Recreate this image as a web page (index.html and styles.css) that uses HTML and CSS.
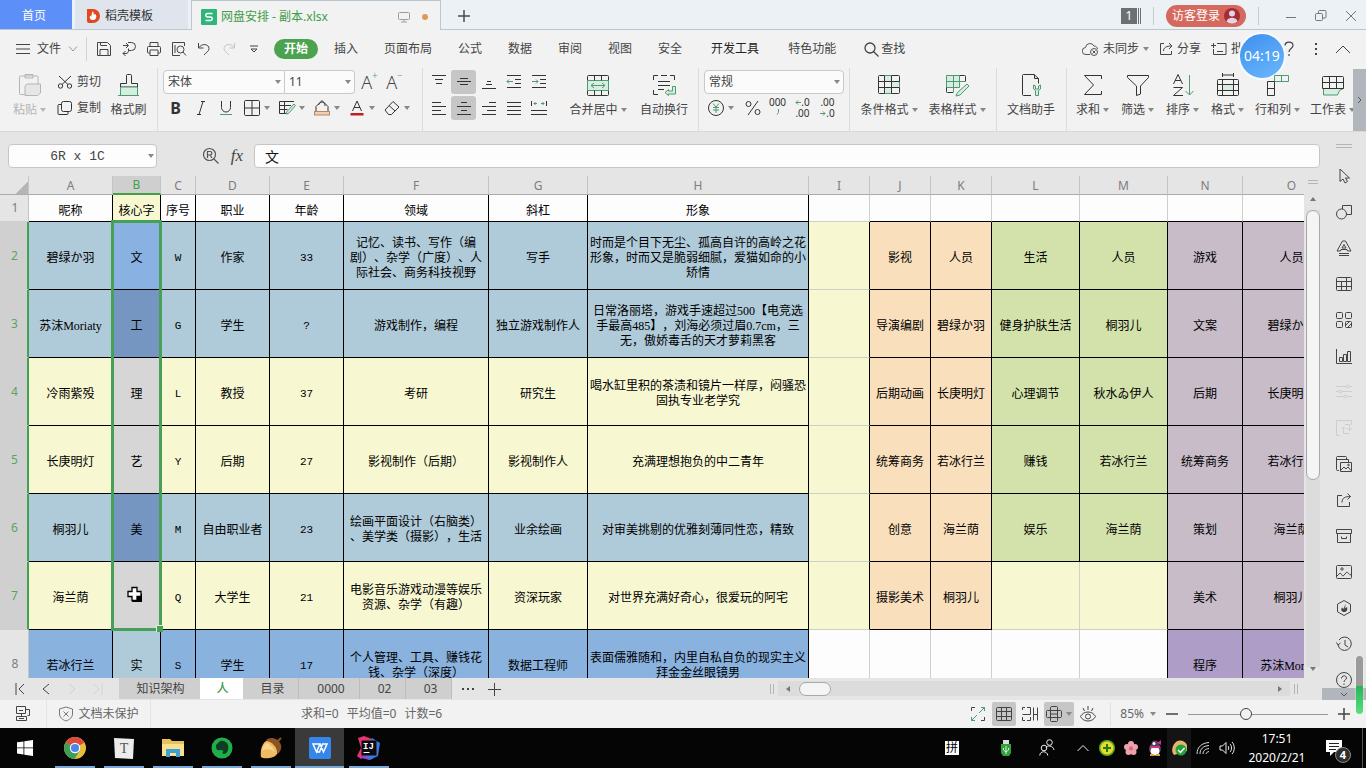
FILE: index.html
```html
<!DOCTYPE html>
<html lang="zh-CN">
<head>
<meta charset="utf-8">
<title>网盘安排 - 副本.xlsx</title>
<link rel="stylesheet" href="styles.css">
</head>
<body>
<div class="app">

<header class="titlebar">
  <button class="tab home">首页</button>
  <button class="tab docer"><svg width="14" height="16" viewBox="0 0 14 16"><path d="M1 1h6a7 7 0 0 1 0 14H3a2 2 0 0 1-2-2z" fill="#df4a1d"/><path d="M7 3c1 2 .2 3 1 4 .5-.3.7-.8.7-1.400C10.500 7 11 9 9.500 11 8.500 12.500 5 12.500 4 10.500 3.300 9 4 8 4.300 7.500 4.500 8.200 5 8.600 5.500 8.600 5.500 6.500 5.800 4.500 7 3z" fill="#fff"/></svg>稻壳模板</button>
  <button class="tab doc"><svg width="16" height="16" viewBox="0 0 16 16"><rect width="16" height="16" rx="1" fill="#2fb57c"/><path d="M11.500 4.500h-5a1.700 1.700 0 0 0 0 3.500h3a1.700 1.700 0 0 1 0 3.500h-5" fill="none" stroke="#fff" stroke-width="1.400"/></svg><span>网盘安排 - 副本.xlsx</span>
    <svg class="push" width="12" height="12" viewBox="0 0 12 12" fill="none" stroke="#9a9da0"><rect x=".5" y="1.500" width="11" height="7" rx="1"/><path d="M6 8.500v2M3 11h6"/></svg><i class="dot"></i></button>
  <button class="newtab" aria-label="新建"><svg width="14" height="14" viewBox="0 0 14 14" stroke="#4a4d50" stroke-width="1.500"><path d="M7 1v12M1 7h12"/></svg></button>
  <div class="winctl">
    <button class="count" aria-label="窗口数"><b>1</b><i></i><i></i></button>
    <span class="vline"></span>
    <button class="login">访客登录<svg width="16" height="16" viewBox="0 0 16 16"><circle cx="8" cy="8" r="8" fill="#a32d38"/><circle cx="8" cy="5.500" r="3" fill="#e3d5e2"/><path d="M2.500 13.500c1-5 10-5 11 0a8 8 0 0 1-11 0z" fill="#e3d5e2"/></svg></button>
    <span class="vline"></span>
    <button class="wbtn" aria-label="最小化"><svg width="12" height="12" viewBox="0 0 12 12" stroke="#777"><path d="M1 7.500h10"/></svg></button>
    <button class="wbtn" aria-label="还原"><svg width="12" height="12" viewBox="0 0 12 12" fill="none" stroke="#777"><rect x=".5" y="3.500" width="7" height="7" rx="1"/><path d="M3.500 3V1.500a1 1 0 0 1 1-1h5.500a1 1 0 0 1 1 1V7a1 1 0 0 1-1 1H8"/></svg></button>
    <button class="wbtn" aria-label="关闭"><svg width="12" height="12" viewBox="0 0 12 12" stroke="#777"><path d="M1 1l10 10M11 1L1 11"/></svg></button>
  </div>
</header>

<nav class="menubar">
  <button class="file"><svg width="14" height="12" viewBox="0 0 14 12" stroke="#444"><path d="M0 1.500h14M0 6h14M0 10.500h14"/></svg>文件<svg width="10" height="6" viewBox="0 0 10 6" fill="none" stroke="#999"><path d="M1 .5l4 4.500 4-4.500"/></svg></button>
  <div class="quick">
    <button aria-label="保存"><svg class="i16" viewBox="0 0 16 16"><path d="M1.500 1.500h10l3 3v10h-13zM4 14V8.500h8V14M5 4.500h6M4.500 1.500v3"/></svg></button>
    <button aria-label="输出"><svg class="i16" viewBox="0 0 16 16"><path d="M2 4.500h5M5 2l2.500 2.500L5 7M7 1.500h3.500a4 4 0 0 1 0 8H7.500M2 12.500h3c1.500 0 2.500-1 2.500-3V7.500M2 12.500l2.500-2.500M2 12.500l2.500 2.500"/></svg></button>
    <button aria-label="打印"><svg class="i16" viewBox="0 0 16 16"><path d="M4 5V1.500h8V5M4 12H2.500a1 1 0 0 1-1-1V6.500a1 1 0 0 1 1-1h11a1 1 0 0 1 1 1V11a1 1 0 0 1-1 1H12M4 9h8v5.500H4z"/></svg></button>
    <button aria-label="预览"><svg class="i16" viewBox="0 0 16 16"><path d="M13.500 5V1.500h-12v13H9M4 4v8"/><circle cx="9.500" cy="8.500" r="3.500"/><path d="M12 11l3 3.500"/></svg></button>
    <button aria-label="撤销"><svg class="i16" viewBox="0 0 16 16"><path d="M2.500 2v5h5M3 6.500c3-4.500 10-3.500 10 1 0 3-3 4-5 6.500"/></svg></button>
    <button aria-label="重做"><svg class="i16 off" viewBox="0 0 16 16"><path d="M13.500 2v5h-5M13 6.500c-3-4.500-10-3.500-10 1 0 3 3 4 5 6.500"/></svg></button>
    <button aria-label="更多"><svg class="i16" viewBox="0 0 16 16"><path d="M4 5h8M5 8l3 3 3-3z"/></svg></button>
  </div>
  <div class="menus">
    <button class="on">开始</button><button>插入</button><button>页面布局</button><button>公式</button><button>数据</button><button>审阅</button><button>视图</button><button>安全</button><button class="dev">开发工具</button><button class="sp">特色功能</button>
    <button class="find"><svg width="15" height="15" viewBox="0 0 15 15" fill="none" stroke="#444" stroke-width="1.300"><circle cx="6" cy="6" r="5"/><path d="M9.500 9.500l5 5"/></svg>查找</button>
  </div>
  <div class="share">
    <button><svg width="17" height="14" viewBox="0 0 17 14" fill="none" stroke="#555"><path d="M8 12.500H4a3.500 3.500 0 0 1-.500-7A4.500 4.500 0 0 1 12 4c2 0 3 1 3.500 3"/><circle cx="12" cy="10" r="3.500"/><path d="M10.500 8.500l3 3M13.500 8.500l-3 3"/></svg>未同步<i class="car"></i></button>
    <button><svg width="14" height="14" viewBox="0 0 14 14" fill="none" stroke="#444"><path d="M5 1.500H1.500v11h11V9M4.500 9c0-3.500 3-5 8-5M10 1l3 3-3 3"/></svg>分享</button>
    <button><svg width="16" height="14" viewBox="0 0 16 14" fill="none" stroke="#444"><path d="M6 1.500h9v11H2.500V7M6 9.500h6M0 3.500h5M2.500 1v5"/></svg>批注</button>
    <span class="timer">04:19</span>
    <button class="q" aria-label="帮助"><svg width="12" height="16" viewBox="0 0 12 16" fill="none" stroke="#444" stroke-width="1.200"><path d="M2 4.500C2 0 10 0 10 4.500 10 7.500 6 7.500 6 11M6 13v2"/></svg></button>
    <button class="q" aria-label="更多"><svg width="4" height="14" viewBox="0 0 4 14" fill="#444"><rect x="1" y="1" width="2" height="2"/><rect x="1" y="6" width="2" height="2"/><rect x="1" y="11" width="2" height="2"/></svg></button>
    <button class="q" aria-label="收起"><svg width="16" height="9" viewBox="0 0 16 9" fill="none" stroke="#444"><path d="M1 8l7-7 7 7"/></svg></button>
  </div>
</nav>

<section class="ribbon">
  <div class="grp g1">
    <button class="big dim"><svg class="i24" viewBox="0 0 24 24"><path d="M9 21.500H2.500a1 1 0 0 1-1-1V4a1 1 0 0 1 1-1H19a1 1 0 0 1 1 1v7"/><path d="M7 1.500h8V5H7z"/><path fill="#e6e6e6" d="M9 11h13.500v9l-3 2.500H7V13z"/></svg><span>粘贴<i class="car"></i></span></button>
    <div class="pair"><button><svg width="16" height="16" viewBox="0 0 16 16" fill="none" stroke="#333"><circle cx="3.500" cy="12" r="2.200"/><circle cx="12.500" cy="12" r="2.200"/><path d="M5 10.500L14 2M11 10.500L2 2"/></svg>剪切</button>
    <button><svg width="16" height="16" viewBox="0 0 16 16" fill="none" stroke="#333"><rect x="4.500" y="1.500" width="10" height="10" rx="2"/><path d="M4 4.500H2a1 1 0 0 0-1 1v8a1 1 0 0 0 1 1h8a1 1 0 0 0 1-1v-1.500"/></svg>复制</button></div>
    <button class="big"><svg class="i24" viewBox="0 0 24 24"><path d="M9.500 2.500a1 1 0 0 1 1-1h3a1 1 0 0 1 1 1v8h6v3.500h-17v-3.500h6z"/><path class="gf" d="M3.500 14h17v8.500h-17z"/><path class="gl" d="M1 22.500h21"/></svg><span>格式刷</span></button>
  </div>
  <div class="grp g2">
    <div class="row">
      <div class="combo"><select class="fname" aria-label="字体"><option>宋体</option></select><i class="car"></i></div><div class="combo end"><select class="fsize" aria-label="字号"><option>11</option></select><i class="car"></i></div>
      <button class="cell25 fbig" aria-label="增大字号">A<sup>+</sup></button><button class="cell25 fbig" aria-label="减小字号">A<sup>−</sup></button>
    </div>
    <div class="row low">
      <button class="cell25 bold" aria-label="加粗">B</button>
      <button class="cell25" aria-label="倾斜"><svg class="i18" viewBox="0 0 18 18"><path d="M9 2.500h4M5 15.500h4M11 2.500l-4 13"/></svg></button>
      <button class="cell25" aria-label="下划线"><svg class="i18" viewBox="0 0 18 18"><path d="M4.500 2v6.500a4.500 4.500 0 0 0 9 0V2"/><path class="gl" d="M3 15.500h12"/></svg></button>
      <button class="drop" aria-label="边框"><svg class="i18" viewBox="0 0 18 18"><rect x="1.500" y="1.500" width="15" height="15" rx="1"/><path d="M9 2v14M2 9h14"/></svg><i class="car"></i></button>
      <button class="drop" aria-label="绘图边框"><svg class="i18" viewBox="0 0 18 18"><path d="M16 2.500H1.500v12H8M1.500 6.500H13M1.500 10.500h8M6.500 2.500v12"/><path class="gf" d="M16 5l1.500 1.500-7 8-2.500.5.500-2z"/></svg><i class="car"></i></button>
      <button class="drop" aria-label="填充"><svg class="i18" viewBox="0 0 18 18"><path d="M9 1.500l6 6v5H3v-5zM5.500 6C7 2 12 2 12 7"/><rect x="1.500" y="12.500" width="15" height="3.500" fill="#f3cfb0" stroke="#b08a6a"/></svg><i class="car"></i></button>
      <button class="drop" aria-label="字体颜色"><svg class="i18" viewBox="0 0 18 18"><path d="M4.500 12L9 2l4.500 10M6 8.500h6"/><rect x="2.500" y="14" width="13" height="2.500" fill="#c11f1f" stroke="none"/></svg><i class="car"></i></button>
      <button class="drop" aria-label="清除"><svg class="i18" viewBox="0 0 18 18"><path d="M10 2.500l6 5.500-7.500 7.500h-3L2 11zM6 6.500l6 5.500"/></svg><i class="car"></i></button>
    </div>
  </div>
  <div class="grp g3">
    <div class="aligns">
      <div class="row">
        <button class="cell25" aria-label="顶端对齐"><svg class="i18" viewBox="0 0 18 18"><path d="M2 2.500h14M5 6.500h8M6 10.500h6"/></svg></button>
        <button class="cell25 act" aria-label="垂直居中"><svg class="i18" viewBox="0 0 18 18"><path d="M5 5.500h8M2 8.500h14M5 11.500h8"/></svg></button>
        <button class="cell25" aria-label="底端对齐"><svg class="i18" viewBox="0 0 18 18"><path d="M7 8.500h4M6 11.500h6M2 15.500h14"/></svg></button>
        <button class="cell25" aria-label="减少缩进"><svg class="i18" viewBox="0 0 18 18"><path d="M2 2.500h14M10 6.500h6M10 10.500h6M2 14.500h14"/><path class="gl" d="M8 8.500H2M4 6.500l-2 2 2 2"/></svg></button>
        <button class="cell25" aria-label="增加缩进"><svg class="i18" viewBox="0 0 18 18"><path d="M2 2.500h14M10 6.500h6M10 10.500h6M2 14.500h14"/><path class="gl" d="M2 8.500h6M6 6.500l2 2-2 2"/></svg></button>
      </div>
      <div class="row low">
        <button class="cell25" aria-label="左对齐"><svg class="i18" viewBox="0 0 18 18"><path d="M2 3.500h9M2 7.500h14M2 11.500h9M2 15.500h14"/></svg></button>
        <button class="cell25 act" aria-label="水平居中"><svg class="i18" viewBox="0 0 18 18"><path d="M6 3.500h6M2 7.500h14M6 11.500h6M2 15.500h14"/></svg></button>
        <button class="cell25" aria-label="右对齐"><svg class="i18" viewBox="0 0 18 18"><path d="M9 3.500h7M2 7.500h14M7 11.500h9M2 15.500h14"/></svg></button>
        <button class="cell25" aria-label="两端对齐"><svg class="i18" viewBox="0 0 18 18"><path d="M2 3.500h14M2 7.500h14M2 11.500h14M2 15.500h14"/></svg></button>
        <button class="cell25" aria-label="分散对齐"><svg class="i18" viewBox="0 0 18 18"><path d="M1.500 2v5M16.500 2v5M1 11.500h16M1 15.500h16"/><path class="gl" d="M4 4.500h3M11 4.500h3M5.500 3L4 4.500 5.500 6M12.500 3L14 4.500 12.500 6"/></svg></button>
      </div>
    </div>
    <button class="big wide"><svg class="i24" viewBox="0 0 24 24"><rect x="1.500" y="2.500" width="21" height="20" rx="1"/><rect class="gf" x="1.500" y="7.500" width="21" height="10"/><path d="M8.500 2.500v5M15.500 2.500v5M8.500 17.500v5M15.500 17.500v5"/><path class="gl" d="M5 12.500h14M8 10l-3 2.500L8 15M16 10l3 2.500-3 2.500"/></svg><span>合并居中<i class="car"></i></span></button>
    <button class="big wide"><svg class="i24" viewBox="0 0 24 24"><path d="M1.500 7V2.500H6M18 2.500h4.500V7M1.500 17v4.500H6M9 2.500h6M6 8.500h12M6 12.500h12M6 16.500h6"/><path class="gf" d="M20.500 13.500h3v7.500h-7v1.500l-3.500-3 3.500-3V18h4z"/></svg><span>自动换行</span></button>
  </div>
  <div class="grp g4">
    <div class="row"><div class="combo solo"><select class="nfmt" aria-label="数字格式"><option>常规</option></select><i class="car"></i></div></div>
    <div class="row low">
      <button class="drop" aria-label="货币"><svg class="i18" viewBox="0 0 18 18"><circle cx="9" cy="9" r="7.500"/><path class="gl" d="M6 4.500l3 3.500 3-3.500M9 8v6M6 8.500h6M6 11h6"/></svg><i class="car"></i></button>
      <button class="cell25" aria-label="百分比"><svg class="i18" viewBox="0 0 18 18"><circle cx="4.500" cy="5" r="2.500"/><circle cx="13.500" cy="13" r="2.500"/><path d="M14 2L4 16"/></svg></button>
      <button class="cell25 digits k"><span>000</span><svg width="4" height="6" viewBox="0 0 4 6" fill="none" stroke="#4d9a73"><path d="M2.500 0v3.500L1 5.500"/></svg></button>
      <button class="cell25 digits"><span><svg width="6" height="5" viewBox="0 0 6 5" fill="none" stroke="#4d9a73"><path d="M6 2.500H1M3 .5l-2 2 2 2"/></svg>.0</span><span>.00</span></button>
      <button class="cell25 digits"><span>.00</span><span><svg width="6" height="5" viewBox="0 0 6 5" fill="none" stroke="#4d9a73"><path d="M0 2.500h5M3 .5l2 2-2 2"/></svg>.0</span></button>
    </div>
  </div>
  <div class="grp g5">
    <button class="big wide"><svg class="i24" viewBox="0 0 24 24"><rect x="1.500" y="2.500" width="21" height="18" rx="1"/><path class="gf" d="M7.500 2.500h7v6h-7zM7.500 14.500h7v6h-7zM14.500 8.500h8v6h-8z"/><path d="M1.500 8.500h21M1.500 14.500h21M7.500 2.500v18M14.500 2.500v18"/></svg><span>条件格式<i class="car"></i></span></button>
    <button class="big wide"><svg class="i24" viewBox="0 0 24 24"><path class="gf" d="M1.500 2.500h13v12h-13z"/><path d="M14.500 2.500h5a1 1 0 0 1 1 1v5M1.500 14.500v4a1 1 0 0 0 1 1H8"/><path class="gl" d="M1.500 8.500h19M8.500 2.500v17M14.500 2.500v9"/><path class="gf" d="M22 11l2 2-9 9-4 1 1.500-3.500z"/></svg><span>表格样式<i class="car"></i></span></button>
  </div>
  <div class="grp g6">
    <button class="big wide"><svg class="i24" viewBox="0 0 24 24"><path d="M12 22.500H4.500a1 1 0 0 1-1-1V2.500a1 1 0 0 1 1-1H15l4.500 4v5M15.500 1.500v4h4"/><path class="gf" d="M14.500 12v4l2 1.500v5h3v-5l2-1.500v-4l-2 1v3h-3v-3z"/></svg><span>文档助手</span></button>
  </div>
  <div class="grp g7">
    <button class="big"><svg class="i24" viewBox="0 0 24 24"><path d="M20.500 6V2.500H3.500l9 9.500-9 9.500h17V18"/></svg><span>求和<i class="car"></i></span></button>
    <button class="big"><svg class="i24" viewBox="0 0 24 24"><path d="M1.500 2.500h21v2L14.500 13v8l-4 1.500V13l-9-8.500z"/></svg><span>筛选<i class="car"></i></span></button>
    <button class="big"><svg class="i24" viewBox="0 0 24 24"><path d="M2.500 11L7 1.500 11.500 11M4 7.500h6M2.500 14.500h9l-9 8h9.500"/><path class="gl" d="M18.500 2v20M14.500 18l4 4 4-4"/></svg><span>排序<i class="car"></i></span></button>
    <button class="big"><svg class="i24" viewBox="0 0 24 24"><rect x="1.500" y="6.500" width="21" height="16" rx="1"/><path class="gf" d="M6.500 11.500h11v6h-11z"/><path d="M1.500 11.500h21M1.500 17.500h21M6.500 6.500v16M17.500 6.500v16M6.500 0v4M17.500 0v4M6.500 2h11"/></svg><span>格式<i class="car"></i></span></button>
    <button class="big mid"><svg class="i24" viewBox="0 0 24 24"><path class="gl" d="M8.500 2.500h14v6h-14zM15.500 2.500v6"/><path d="M1.500 8.500h7v14h-7zM1.500 15.500h7"/></svg><span>行和列<i class="car"></i></span></button>
    <button class="big mid"><svg class="i24" viewBox="0 0 24 24"><path class="gf" d="M2.500 15.500h20l-4 2-2 4.500h-14z"/><path d="M1.500 15.500v-11a1 1 0 0 1 1-1h19a1 1 0 0 1 1 1v11zM1.500 9.500h21M8.500 3.500v12M15.500 3.500v12"/></svg><span>工作表<i class="car"></i></span></button>
    <button class="more" aria-label="更多工具"><svg width="6" height="8" viewBox="0 0 6 8" fill="none" stroke="#555"><path d="M1 1l3 3-3 3"/></svg></button>
  </div>
</section>

<main class="work">
  <div class="left">
    <div class="fbar">
      <div class="namebox"><input aria-label="名称框" value="6R x 1C"><i class="car"></i></div>
      <button class="mag" aria-label="查看"><svg width="18" height="18" viewBox="0 0 18 18" fill="none" stroke="#555" stroke-width="1.200"><circle cx="7.500" cy="7.500" r="6"/><path d="M12 12l4.500 4.500M5.500 11V4.500h2.500c2.500 0 2.500 3.500 0 3.500H5.500M8 8l2 3"/></svg></button>
      <button class="fx" aria-label="插入函数">fx</button>
      <input class="formula" aria-label="编辑栏" value="文">
    </div>
    <div class="sheetrow">
      <div class="sheet">
      <table>
        <colgroup><col class="c0"><col class="cA"><col class="cB"><col class="cC"><col class="cD"><col class="cD"><col class="cF"><col class="cG"><col class="cH"><col class="cI"><col class="cI"><col class="cI"><col class="cL"><col class="cL"><col class="cN"><col class="cO"></colgroup>
        <thead><tr><th class="corner"></th><th>A</th><th class="sel">B</th><th>C</th><th>D</th><th>E</th><th>F</th><th>G</th><th>H</th><th>I</th><th>J</th><th>K</th><th>L</th><th>M</th><th>N</th><th>O</th></tr></thead>
        <tbody>
        <tr class="r1"><th>1</th><td>昵称</td><td class="ye">核心字</td><td>序号</td><td>职业</td><td>年龄</td><td>领域</td><td>斜杠</td><td>形象</td><td class="nb nr"></td><td class="nr"></td><td class="nr"></td><td class="nr"></td><td class="nr"></td><td class="nr"></td><td class="nr"></td></tr>
        <tr class="s bl"><th>2</th><td>碧绿か羽</td><td class="b1 anchor">文<i class="selbox"></i></td><td class="n">W</td><td>作家</td><td class="n">33</td><td>记忆、读书、写作（编<br>剧）、杂学（广度）、人<br>际社会、商务科技视野</td><td>写手</td><td>时而是个目下无尘、孤高自许的高岭之花<br>形象，时而又是脆弱细腻，爱猫如命的小<br>矫情</td><td class="ye nb"></td><td class="or">影视</td><td class="or">人员</td><td class="gr">生活</td><td class="gr">人员</td><td class="pu">游戏</td><td class="pu">人员</td></tr>
        <tr class="s bl"><th>3</th><td>苏沫Moriaty</td><td class="b2">工</td><td class="n">G</td><td>学生</td><td class="n">?</td><td>游戏制作，编程</td><td>独立游戏制作人</td><td>日常洛丽塔，游戏手速超过500【电竞选<br>手最高485】，刘海必须过眉0.7cm，三<br>无，傲娇毒舌的天才萝莉黑客</td><td class="ye nb"></td><td class="or">导演编剧</td><td class="or">碧绿か羽</td><td class="gr">健身护肤生活</td><td class="gr">桐羽儿</td><td class="pu">文案</td><td class="pu">碧绿か羽</td></tr>
        <tr class="s yl"><th>4</th><td>冷雨紫殁</td><td class="b3">理</td><td class="n">L</td><td>教授</td><td class="n">37</td><td>考研</td><td>研究生</td><td>喝水缸里积的茶渍和镜片一样厚，闷骚恐<br>固执专业老学究</td><td class="ye nb"></td><td class="or">后期动画</td><td class="or">长庚明灯</td><td class="gr">心理调节</td><td class="gr">秋水ゐ伊人</td><td class="pu">后期</td><td class="pu">长庚明灯</td></tr>
        <tr class="s yl"><th>5</th><td>长庚明灯</td><td class="b3">艺</td><td class="n">Y</td><td>后期</td><td class="n">27</td><td>影视制作（后期）</td><td>影视制作人</td><td>充满理想抱负的中二青年</td><td class="ye nb"></td><td class="or">统筹商务</td><td class="or">若冰行兰</td><td class="gr">赚钱</td><td class="gr">若冰行兰</td><td class="pu">统筹商务</td><td class="pu">若冰行兰</td></tr>
        <tr class="s bl"><th>6</th><td>桐羽儿</td><td class="b2">美</td><td class="n">M</td><td>自由职业者</td><td class="n">23</td><td>绘画平面设计（右脑类）<br>、美学类（摄影），生活</td><td>业余绘画</td><td>对审美挑剔的优雅刻薄同性恋，精致</td><td class="ye nb"></td><td class="or">创意</td><td class="or">海兰荫</td><td class="gr">娱乐</td><td class="gr">海兰荫</td><td class="pu">策划</td><td class="pu">海兰荫</td></tr>
        <tr class="s yl"><th>7</th><td>海兰荫</td><td class="b3"><svg class="cur" width="18" height="18" viewBox="0 0 18 18"><path d="M8 8h8v8H6z" fill="#000"/><path d="M6 1.500h5v4h4v5h-4v4H6v-4H2v-5h4z" fill="#fff" stroke="#000" stroke-width="1.300"/></svg></td><td class="n">Q</td><td>大学生</td><td class="n">21</td><td>电影音乐游戏动漫等娱乐<br>资源、杂学（有趣）</td><td>资深玩家</td><td>对世界充满好奇心，很爱玩的阿宅</td><td class="ye nb"></td><td class="or">摄影美术</td><td class="or">桐羽儿</td><td class="ye nb nr"></td><td class="ye nb"></td><td class="pu">美术</td><td class="pu">桐羽儿</td></tr>
        <tr class="b8"><th>8</th><td>若冰行兰</td><td class="lb">实</td><td class="n">S</td><td>学生</td><td class="n">17</td><td>个人管理、工具、赚钱花<br>钱、杂学（深度）</td><td>数据工程师</td><td>表面儒雅随和，内里自私自负的现实主义<br>拜金金丝眼镜男</td><td class="wh nr"></td><td class="wh nr"></td><td class="wh nr"></td><td class="wh nr"></td><td class="wh"></td><td class="vi">程序</td><td class="vi">苏沫Moriaty</td></tr>
        </tbody>
      </table>
      </div>
      <div class="vscroll"><i class="grip"></i><i class="up"></i><div class="vtrack"><i class="vthumb"></i></div><i class="down"></i></div>
    </div>
    <div class="tabs">
      <div class="tnav">
        <button aria-label="首个"><svg width="10" height="12" viewBox="0 0 10 12" fill="none" stroke="#444"><path d="M1 0v12M9 1L4 6l5 5"/></svg></button>
        <button aria-label="上一个"><svg width="10" height="12" viewBox="0 0 10 12" fill="none" stroke="#444"><path d="M8 1L2 6l6 5"/></svg></button>
        <button aria-label="下一个"><svg width="10" height="12" viewBox="0 0 10 12" fill="none" stroke="#d2d2d2"><path d="M2 1l6 5-6 5"/></svg></button>
        <button aria-label="末个"><svg width="10" height="12" viewBox="0 0 10 12" fill="none" stroke="#d2d2d2"><path d="M9 0v12M1 1l5 5-5 5"/></svg></button>
      </div>
      <button class="st t1">知识架构</button><button class="st t2">人</button><button class="st t3">目录</button><button class="st t4">0000</button><button class="st t5">02</button><button class="st t5">03</button>
      <button class="tb" aria-label="更多表"><svg width="14" height="4" viewBox="0 0 14 4" fill="#444"><rect y="1" width="2" height="2"/><rect x="5" y="1" width="2" height="2"/><rect x="10" y="1" width="2" height="2"/></svg></button>
      <button class="tb" aria-label="新建表"><svg width="14" height="14" viewBox="0 0 14 14" stroke="#444"><path d="M7.500 1v13M1 7.500h13"/></svg></button>
      <div class="hscroll"><i class="vg"></i><div class="htrack"><i class="la"></i><i class="hthumb"></i><i class="ra"></i></div><i class="vg"></i></div>
    </div>
  </div>
  <aside class="side">
    <i class="grip"></i>
    <button aria-label="选择"><svg class="i16" viewBox="0 0 16 16"><path d="M4 1v12.500l3-2.500 2 4 2.500-1.500-2-3.500h4z"/></svg></button>
    <button aria-label="形状"><svg class="i16" viewBox="0 0 16 16"><circle cx="5.500" cy="10" r="5"/><path d="M6.500 5V1.500h9v9H10.500"/></svg></button>
    <button aria-label="艺术字"><svg class="i16" viewBox="0 0 16 16"><path d="M6.500 1h3L15 11h-3.500L11 9.500H5L4.500 11H1zM8 4.500L6 8h4zM3 13.500h10M3 15.500h10"/></svg></button>
    <button aria-label="表格"><svg class="i16" viewBox="0 0 16 16"><rect x=".5" y="1.500" width="15" height="13" rx="1"/><path d="M.5 5.500h15M.5 10.500h15M5.500 5.500v9M10.500 1.500v13"/></svg></button>
    <button aria-label="样式"><svg class="i16" viewBox="0 0 16 16"><rect x=".5" y=".5" width="6" height="6" rx="1"/><rect x="9.500" y=".5" width="6" height="6" rx="1"/><rect x=".5" y="9.500" width="6" height="6" rx="1"/><rect x="9.500" y="9.500" width="6" height="6" rx="1"/><path d="M10 13l3.500-3.500M12 15l3-3"/></svg></button>
    <button aria-label="图表"><svg class="i16" viewBox="0 0 16 16"><path d="M.5 1v14.500H16M3.500 13.500v-4h3v4zM7.500 13.500v-7h3v7zM11.500 13.500v-10h3v10z"/></svg></button>
    <button aria-label="设置"><svg class="i16 off" viewBox="0 0 16 16"><path d="M0 2.500h10M13 2.500h3M0 7.500h3M6 7.500h10M0 12.500h8M11 12.500h5"/><circle cx="11.500" cy="2.500" r="1.500"/><circle cx="4.500" cy="7.500" r="1.500"/><circle cx="9.500" cy="12.500" r="1.500"/></svg></button>
    <button aria-label="转换"><svg class="i16 off" viewBox="0 0 16 16"><path d="M15.500 5V.5H.5v15H4M9 4.500h4.500v6M11 8l2.500 2.500L16 8M7.500 7v6.500h6M5.500 9l2-2 2 2"/></svg></button>
    <button aria-label="图库"><svg class="i16" viewBox="0 0 16 16"><path d="M3 14.500H1.500a1 1 0 0 1-1-1v-12a1 1 0 0 1 1-1h8a1 1 0 0 1 1 1V3M.5 3.500h12V6"/><path d="M4.500 6.500h11v9h-11zM5 14l3-3 2 2 2-2 3 3.500"/><circle cx="12.500" cy="9" r=".8"/></svg></button>
    <button aria-label="导出"><svg class="i16" viewBox="0 0 16 16"><path d="M6 3.500H1.500v11h12V10M6 10.500C6 6 9 4.500 14.500 4.500M11.500 1.500l3 3-3 3"/></svg></button>
    <button aria-label="存档"><svg class="i16" viewBox="0 0 16 16"><path d="M.5 1.500h15v4H.5zM1.500 5.500v9h13v-9M5.500 8.500v2h5v-2"/></svg></button>
    <button aria-label="图片"><svg class="i16" viewBox="0 0 16 16"><rect x=".5" y="1.500" width="15" height="13" rx="1"/><circle cx="6" cy="5" r="1.200"/><path d="M1 12l3-3c1 0 2 3 3 3s3-4 4-4 1.500 3 4.500 3"/></svg></button>
    <button aria-label="稻壳"><svg class="i16" viewBox="0 0 16 16"><path d="M8 .5l6.500 3.700v7.600L8 15.500l-6.500-3.700V4.200z"/><path fill="#444" stroke="none" d="M9 4c.3 2-1 3-1.500 5L6 7.500c-1.500 2-.5 4.500 2 4.500s4-2 3-5c-1 .5-2 1-2.500 2C9 7 10 6 9 4z"/></svg></button>
    <button aria-label="历史"><svg class="i16" viewBox="0 0 16 16"><path d="M2 9a6.700 6.700 0 1 0 1-5M.5 6.500L2 9l2.500-2M9 4v5l3 2"/></svg></button>
    <button aria-label="帮助"><svg class="i16" viewBox="0 0 16 16"><circle cx="8" cy="8" r="7.500"/><path d="M5.500 6.500c0-3.500 5-3.500 5-.5C10.500 8 8 7.500 8 10M8 11.500V13"/></svg></button>
    <span class="sidemore"><svg width="8" height="5" viewBox="0 0 8 5" fill="none" stroke="#555"><path d="M1 1l3 3 3-3"/></svg></span>
    <i class="pill"></i>
  </aside>
</main>

<footer class="status">
  <button class="sicon" aria-label="模式"><svg class="i16" viewBox="0 0 16 16"><path d="M1.500.5h9v7h-9zM4 4.500h4M10.500 3.500h4v6h-2M6.500 7.500v3M1.500 10.500h10v4h-10zM4 12.500h5"/></svg></button>
  <button class="protect"><svg width="16" height="16" viewBox="0 0 16 16" fill="none" stroke="#777"><path d="M8 1l6.500 2v5c0 3-2.500 5.500-6.500 7-4-1.500-6.500-4-6.500-7V3zM5.500 5.500l5 5M10.500 5.500l-5 5"/></svg>文档未保护</button>
  <div class="sums"><span>求和=0</span><span>平均值=0</span><span>计数=6</span></div>
  <div class="views">
    <button aria-label="全屏"><svg class="i16" viewBox="0 0 16 16"><path d="M1.500 5V1.500H5M11 14.500h3.500V11"/><path class="gl" d="M9 7l5.500-5.500M11 1.500h3.500V5M7 9l-5.500 5.500M1.500 11v3.500H5"/></svg></button>
    <button class="act" aria-label="普通"><svg class="i16" viewBox="0 0 16 16"><rect x=".5" y="1.500" width="15" height="13" rx="1"/><path d="M.5 5.500h15M.5 10.500h15M5.500 1.500v13M10.500 1.500v13"/></svg></button>
    <button aria-label="分页"><svg class="i16" viewBox="0 0 16 16"><path d="M.5 4V1.500H3M5 1.500h3.500v7H.5M.5 11v3.500H3M5 14.500h3.500V11M11.500 1.500v13M15.500 1.500v13M11.500 8.500h4"/></svg></button>
    <button class="act two" aria-label="阅读"><svg class="i16" viewBox="0 0 16 16"><rect x="4.500" y=".5" width="7" height="15" rx="1"/><rect x=".5" y="4.500" width="15" height="7" rx="1"/><path d="M4.500 8h7"/></svg><i class="car"></i></button>
    <button aria-label="护眼"><svg class="i16" viewBox="0 0 16 16"><path d="M.5 10.500c3-6 12-6 15 0-3 6-12 6-15 0zM8 0v4M3 2l1.500 3M13 2l-1.500 3"/><circle cx="8" cy="10.500" r="2.500"/></svg></button>
  </div>
  <div class="zoom"><button class="pct">85%<i class="car"></i></button>
    <button aria-label="缩小"><svg width="12" height="12" viewBox="0 0 12 12" stroke="#444" stroke-width="1.500"><path d="M0 6h12"/></svg></button>
    <input type="range" min="0" max="100" value="41" aria-label="缩放">
    <button aria-label="放大"><svg width="12" height="12" viewBox="0 0 12 12" stroke="#444" stroke-width="1.500"><path d="M0 6h12M6 0v12"/></svg></button></div>
</footer>

<div class="taskbar">
  <button class="win" aria-label="开始菜单"><svg width="16" height="16" viewBox="0 0 16 16" fill="#fff"><path d="M0 2.300L6.500 1.400v6.100H0zM7.300 1.300L16 0v7.500H7.300zM0 8.300h6.500v6.200L0 13.600zM7.300 8.300H16V16l-8.700-1.300z"/></svg></button>
  <button class="app-b" aria-label="Chrome"><svg width="22" height="22" viewBox="0 0 22 22"><circle cx="11" cy="11" r="11" fill="#e8bf3c"/><path d="M11 11L1.500 5.500A11 11 0 0 1 20.500 5.500z" fill="#dc4c3c"/><path d="M11 11L1.500 5.500A11 11 0 0 0 10.500 22l5-8z" fill="#3c9c58"/><path d="M11 6h9.700l-.7-1.500L11 5z" fill="#dc4c3c"/><circle cx="11" cy="11" r="5.200" fill="#fff"/><circle cx="11" cy="11" r="4.100" fill="#4a87ec"/></svg></button>
  <button class="app-b" aria-label="Typora"><svg width="22" height="22" viewBox="0 0 22 22"><path d="M1 1l20 1-1 20-18-1z" fill="#ececec"/><text x="11" y="16" text-anchor="middle" font-family="Liberation Serif" font-size="14" fill="#555">T</text></svg></button>
  <button class="app-b" aria-label="资源管理器"><svg width="22" height="20" viewBox="0 0 22 20"><path d="M0 1h8l2 2h12v15H0z" fill="#e7c15c"/><path d="M0 6h22v12H0z" fill="#f8e08e"/><path d="M4 19v-8h14v8h-4v-4H8v4z" fill="#3ba0d8"/></svg></button>
  <button class="app-b" aria-label="印象笔记"><svg width="22" height="22" viewBox="0 0 22 22"><circle cx="11" cy="11" r="10.500" fill="#1fae4a"/><path d="M5 8l4-4c4-1 7 1 8 4 1 5-1 9-4 9-2 0-2-3 0-3-2-1-3-1-4-1-4 1-4-2-4-5z" fill="#103c25"/></svg></button>
  <button class="app-b" aria-label="坚果云"><svg width="22" height="22" viewBox="0 0 22 22"><path d="M6 3C10-1 19 1 21 8c1 4-1 8-4 9z" fill="#8c5325"/><path d="M21 1l-4 4" stroke="#8c5325" stroke-width="2"/><path d="M6 4c5 0 12 6 11 13-3 5-14 5-16 3C0 13 2 7 6 4z" fill="#efba62"/><path d="M6 6c3 0 7 4 9 9-4-3-9-4-13-1 0-3 2-6 4-8z" fill="#f7d48c"/></svg></button>
  <button class="app-b cur-app" aria-label="WPS"><svg width="22" height="22" viewBox="0 0 22 22"><rect width="22" height="22" rx="2" fill="#3586ea"/><path d="M4 7h7l-3.500 8zM11 7l3.500 8L18 7h-4.500l-3 8H8" fill="none" stroke="#fff" stroke-width="1.500"/></svg></button>
  <button class="app-b" aria-label="IntelliJ IDEA"><svg width="24" height="24" viewBox="0 0 24 24"><path d="M1 2l6-2 8 3 1 9L4 23 0 20l4-8z" fill="#e5356f"/><path d="M15 2l8 5-2 13-8 4-9-3z" fill="#3f78dd"/><path d="M4 22l1-5 8 7z" fill="#9b3fd0"/><rect x="4.500" y="4.500" width="15" height="15" fill="#0c0c10"/><text x="6" y="13" font-family="Liberation Mono" font-weight="700" font-size="9" fill="#fff">IJ</text><path d="M6.500 16.500h6" stroke="#fff"/></svg></button>
  <div class="tray">
    <span class="ime">拼</span>
    <span class="t40"><svg width="12" height="16" viewBox="0 0 12 16"><path d="M3 0h6v5H3z" fill="#ddd"/><path d="M1 4h10v9l-2 3H3l-2-3z" fill="#33a23c"/><path d="M6 6v8M3.500 8v2L6 12l2.500-2V8" fill="none" stroke="#d9f3d9"/></svg></span>
    <span class="t40"><svg width="16" height="18" viewBox="0 0 16 18" fill="none" stroke="#eee"><circle cx="10.500" cy="3.500" r="2.800"/><path d="M7 9c1-3 7-3 8 2"/><circle cx="5" cy="9" r="2.800"/><path d="M.8 16.500c0-5 7.500-5 8 0"/></svg></span>
    <span class="t24"><svg width="12" height="8" viewBox="0 0 12 8" fill="none" stroke="#eee"><path d="M.5 7L6 1.500 11.500 7"/></svg></span>
    <span class="t24"><svg width="16" height="16" viewBox="0 0 16 16"><circle cx="8" cy="8" r="8" fill="#58a91d"/><circle cx="8" cy="8" r="6.500" fill="#e9d92b"/><path d="M8 4v8M4 8h8" stroke="#257a18" stroke-width="2"/></svg></span>
    <span class="t24"><svg width="14" height="14" viewBox="0 0 14 14" fill="#efa2ae"><circle cx="7" cy="3" r="3"/><circle cx="11" cy="6" r="3"/><circle cx="9.500" cy="11" r="3"/><circle cx="4.500" cy="11" r="3"/><circle cx="3" cy="6" r="3"/><circle cx="7" cy="7.500" r="2" fill="#d96980"/></svg></span>
    <span class="t24"><svg width="14" height="16" viewBox="0 0 14 16"><ellipse cx="7" cy="9" rx="6" ry="6" fill="#54445a"/><circle cx="7" cy="4" r="3.500" fill="#54445a"/><ellipse cx="7" cy="11" rx="4.500" ry="4.500" fill="#fff"/><circle cx="6" cy="3.500" r="1.500" fill="#fff"/><path d="M2 6h10v2H2zM9 3l4-3v5z" fill="#d52c9b"/><path d="M2 14h4v2H2zM8 14h4v2H8z" fill="#e8a32c"/></svg></span>
    <span class="t24 lit"><svg width="16" height="16" viewBox="0 0 16 16"><path d="M4 3c3-4 10-3 12 2v6L3 15C0 12 1 6 4 3z" fill="#e6b56b"/><circle cx="10" cy="10" r="5.500" fill="#22a23b"/><path d="M7 10l2.500 2.500L13.500 8" fill="none" stroke="#fff" stroke-width="1.500"/></svg></span>
    <span class="t24"><svg width="14" height="14" viewBox="0 0 14 14" fill="none" stroke="#ddd"><path d="M1 13C1 6 6 2 13 1.500M4 13c0-5 3-8 9-8.500M7 13c0-3 2-5 6-5.500M10 13c0-1 1-2 3-2.500"/></svg></span>
    <span class="t24"><svg width="16" height="14" viewBox="0 0 16 14" fill="none" stroke="#eee"><path d="M1 5h2.500L7 1.500v11L3.500 9H1zM9 5c1 1 1 3 0 4M11 3c2 2 2 6 0 8M13 1c3 3 3 9 0 12"/></svg></span>
    <div class="clock"><span>17:51</span><span>2020/2/21</span></div>
    <div class="note"><svg width="16" height="16" viewBox="0 0 16 16"><path d="M0 0h16v12H8l-4 4v-4H0z" fill="#fff"/><path d="M3 3.500h10M3 6.500h10M3 9.500h7" stroke="#222"/></svg><b>4</b></div>
  </div>
</div>
</div>
</body>
</html>
```
FILE: styles.css
```css
* { box-sizing: border-box; }
body { margin: 0; font: 12px/16px "Noto Sans", "Noto Sans CJK SC", sans-serif; color: #444; text-spacing-trim: space-all; }
button { border: 0; background: none; padding: 0; margin: 0; font: inherit; color: inherit; display: flex; align-items: center; justify-content: center; white-space: nowrap; flex-shrink: 0; }
input, select { font: inherit; color: inherit; margin: 0; border: 0; outline: 0; }
svg { display: block; flex-shrink: 0; }
i { display: block; flex-shrink: 0; }
.app { height: 100vh; display: flex; flex-direction: column; overflow: hidden; background: #f2f2f2; }
.i16, .i18, .i24 { width: 16px; height: 16px; fill: none; stroke: #444; stroke-width: 1; }
.i18 { width: 18px; height: 18px; stroke: #333; }
.i24 { width: 24px; height: 24px; stroke: #333; }
.off { stroke: #c4c4c4; }
.gl { stroke: #4d9a73; fill: none; }
.gf { stroke: #4d9a73; fill: #d7ede0; }
.car { border: 3px solid transparent; border-top: 4px solid #888; border-bottom: 0; }

.titlebar { height: 30px; flex-shrink: 0; display: flex; background: #ecf1f5; border-bottom: 1px solid #b9c7d2; }
.tab { height: 29px; padding-top: 3px; }
.home { width: 72px; padding-right: 4px; background: #5c8ff7; color: #fff; }
.docer { width: 113px; margin-left: 3px; padding-left: 11px; justify-content: flex-start; gap: 5px; background: #dfe4ed; color: #333; }
.doc { width: 250px; height: 30px; margin-left: 3px; padding: 3px 12px 0 9px; gap: 4px; background: #f2f2f2; border: 1px solid #b9c7d2; border-bottom: 0; color: #3f9d48; }
.push { margin-left: auto; margin-right: 8px; }
.dot { width: 6px; height: 6px; border-radius: 3px; background: #dc9a58; }
.newtab { width: 46px; padding-top: 2px; }
.winctl { margin-left: auto; display: flex; align-items: center; padding-top: 2px; }
.count { gap: 1px; margin-right: 12px; }
.count b { width: 16px; height: 16px; background: #6c7072; color: #fff; font-weight: 400; }
.count i { width: 1px; height: 16px; background: #6c7072; }
.vline { width: 1px; height: 18px; background: #c5ccd2; }
.login { height: 22px; width: 80px; margin: 0 12px; gap: 4px; border-radius: 11px; background: #d5695d; color: #fff; }
.wbtn { width: 30px; height: 28px; }
.vline + .wbtn { margin-left: 17px; }

.menubar { height: 38px; flex-shrink: 0; display: flex; align-items: center; }
.file { width: 87px; height: 24px; padding-left: 16px; gap: 7px; justify-content: flex-start; border-right: 1px solid #d3d3d3; }
.quick { display: flex; padding-left: 4px; }
.quick button { width: 25px; height: 24px; }
.menus { display: flex; align-items: center; gap: 26px; padding-left: 8px; }
.menus .on { width: 44px; height: 20px; margin-right: -10px; border-radius: 10px; background: #4ba350; color: #fff; font-weight: 700; }
.menus .dev { margin-left: 3px; color: #222; }
.menus .sp { margin-left: 3px; }
.menus .find { gap: 2px; margin-left: 2px; }
.share { position: relative; margin-left: auto; display: flex; align-items: center; gap: 10px; padding-right: 14px; color: #444; }
.share button { gap: 4px; }
.share .q { width: 16px; margin-right: 1px; }
.share .timer + .q { margin-left: 16px; margin-right: 1px; }
.timer { position: absolute; right: 80px; top: -9px; width: 48px; height: 48px; border: 2px solid #f5fbff; border-radius: 24px; background: linear-gradient(150deg, #3f8fee, #58a8f8 60%, #6cb8fb); color: #fff; font-size: 14px; line-height: 44px; text-align: center; }

.ribbon { height: 64px; flex-shrink: 0; display: flex; border-bottom: 1px solid #d9d9d9; overflow: hidden; }
.grp { border-right: 1px solid #dcdcdc; flex-shrink: 0; }
.g1 { width: 158px; display: flex; padding-left: 7px; }
.g2 { width: 265px; padding-left: 5px; }
.g3 { width: 276px; display: flex; padding-left: 3px; }
.g4 { width: 151px; padding-left: 5px; }
.g5 { width: 147px; display: flex; padding-left: 5px; }
.g6 { width: 70px; display: flex; }
.g7 { flex: 1 1 0; display: flex; padding-left: 3px; border: 0; min-width: 0; position: relative; }
.big { flex-direction: column; justify-content: flex-start; gap: 5px; padding-top: 5px; width: 45px; }
.big span { display: flex; align-items: center; gap: 3px; }
.big.wide { width: 68px; }
.g3 .big.wide { width: 66px; }
.dim { color: #b5b5b5; }
.dim .i24 { stroke: #b5b5b5; }
.dim .car { border-top-color: #b5b5b5; }
.pair { width: 54px; padding: 6px 0 0 5px; display: flex; flex-direction: column; gap: 10px; }
.pair button { gap: 4px; justify-content: flex-start; }
.row { display: flex; align-items: center; height: 28px; }
.low { height: 24px; }
.combo { position: relative; display: flex; align-items: center; }
.combo select { appearance: none; height: 24px; border: 1px solid #c9c9c9; border-radius: 4px 0 0 4px; background: #fbfbfb; padding: 0 4px; }
.combo .car { position: absolute; right: 4px; }
.combo .fname { width: 122px; }
.combo .fsize { width: 70px; border-left: 0; border-radius: 0 4px 4px 0; }
.combo.solo select { border-radius: 4px; width: 140px; }
.cell25 { width: 25px; height: 24px; border-radius: 3px; }
.bold { font-size: 16px; font-weight: 700; color: #333; }
.act { background: #c6c6c6; }
.fbig { font-size: 18px; font-weight: 300; }
.g2 .row .fbig:nth-child(3) { margin-left: 2px; }
.fbig sup { font-size: 10px; line-height: 10px; color: #4d9a73; align-self: flex-start; }
.g2 .low .cell25:nth-child(3) { margin-right: 3px; }
.drop { width: 35px; justify-content: flex-start; gap: 3px; padding-left: 2px; }
.aligns { width: 139px; }
.g4 .low { padding-left: 1px; }
.digits { flex-direction: column; font-size: 10px; line-height: 11px; color: #333; }
.digits span { display: flex; align-items: center; }
.k { justify-content: flex-start; gap: 1px; padding-top: 1px; }
.mid { width: 55px; }
.more { position: absolute; right: 0; top: 1px; width: 13px; height: 62px; background: #b0b6bb; }

.work { flex: 1; display: flex; min-height: 0; background: #e5e5e5; }
.left { flex: 1; min-width: 0; display: flex; flex-direction: column; }
.fbar { height: 44px; flex-shrink: 0; display: flex; align-items: center; padding: 4px 2px 0 8px; }
.namebox { position: relative; display: flex; align-items: center; }
.namebox input { width: 149px; height: 24px; border: 1px solid #c6c6c6; border-radius: 4px; background: #fdfdfd; text-align: center; padding-right: 12px; font: 13px "Liberation Mono", monospace; }
.namebox .car { position: absolute; right: 3px; }
.mag { margin-left: 45px; }
.fx { width: 34px; font: italic 17px "Liberation Serif", serif; color: #444; }
.formula { flex: 1; min-width: 0; height: 24px; border: 1px solid #c6c6c6; border-radius: 4px; background: #fdfdfd; padding: 0 10px; font-size: 14px; color: #111; }
.sheetrow { flex: 1; min-height: 0; display: flex; }
.sheet { flex: 1; min-width: 0; overflow: hidden; }
table { width: 1341px; table-layout: fixed; border-collapse: separate; border-spacing: 0; }
.c0 { width: 29px; } .cA { width: 84px; } .cB { width: 48px; } .cC { width: 35px; } .cD { width: 74px; }
.cF { width: 145px; } .cG { width: 99px; } .cH { width: 221px; } .cI { width: 61px; } .cL { width: 88px; } .cN { width: 75px; } .cO { width: 98px; }
th { padding: 0 0 0 2px; font-weight: 400; color: #7d7d7d; background: #e5e5e5; border-right: 1px solid #c4c4c4; border-bottom: 1px solid #cfcfcf; }
thead th { height: 19px; padding: 1px 0 0; border-bottom-color: #ababab; line-height: 16px; }
.corner { background: linear-gradient(135deg, #e5e5e5 0 72%, #b5b5b5 72%); }
.sel { background: #cfcfcf; color: #43a047; border-bottom: 2px solid #43a047; }
tbody tr { height: 68px; }
tbody .r1 { height: 27px; }
td { padding: 5px 0 0; text-align: center; vertical-align: middle; white-space: nowrap; color: #000; background: #fdfdfd; border-right: 1px solid #000; border-bottom: 1px solid #000; font: 12px/15px "Liberation Serif", "Noto Sans CJK SC", serif; }
.r1 td { padding-top: 6px; }
.n { font: 11px/15px "Liberation Mono", monospace; }
.s th { background: #d0d0d0; color: #58a65c; border-right: 2px solid #43a055; }
.bl td, td.lb { background: #afcad8; }
.yl td, td.ye, .r1 td.ye { background: #f7f7d2; }
.b8 td { background: #89b2df; }
.b8 td.lb { background: #afcad8; }
.bl td.ye { background: #f7f7d2; }
tr td.b1 { background: #89b2e2; }
tr td.b2 { background: #7596c0; }
tr td.b3 { background: #d6d6d6; }
tr td.or { background: #fadfbc; }
tr td.gr { background: #d3e2aa; }
tr td.pu { background: #c8bcc9; }
tr td.vi { background: #ad9dc7; }
tr td.wh { background: #fdfdfd; }
td.nb { border-bottom-color: #cfcfc4; }
td.nr { border-right-color: #cfcfcf; }
.anchor { position: relative; }
.selbox { position: absolute; left: -2px; right: -2px; top: -2px; height: 411px; border: 3px solid #46a055; z-index: 1; }
.selbox::after { content: ""; position: absolute; right: -4px; bottom: -4px; width: 6px; height: 6px; background: #46a055; border: 1px solid #dff0df; border-width: 1px 0 0 1px; }
.cur { margin: -6px auto 0 13px; }
.vscroll { width: 18px; display: flex; flex-direction: column; align-items: center; padding-bottom: 7px; }
.grip { width: 10px; height: 4px; border: 1px solid #b5b5b5; border-width: 1px 0; }
.vscroll .grip { margin: 4px 0 10px; }
.up { border: 3px solid transparent; border-bottom: 4px solid #777; border-top: 0; margin: 3px 0 9px; }
.down { border: 3px solid transparent; border-top: 4px solid #777; border-bottom: 0; }
.vtrack { flex: 1; width: 14px; background: #dcdcdc; }
.vthumb { height: 59%; width: 14px; border: 1px solid #a8a8a8; border-radius: 7px; background: #f4f4f4; }
.tabs { height: 22px; flex-shrink: 0; display: flex; align-items: center; padding-bottom: 1px; }
.tnav { width: 119px; display: flex; padding-left: 7px; }
.tnav button { width: 26px; }
.st { height: 21px; padding-left: 4px; background: #cfcfcf; border-right: 1px solid #bdbdbd; }
.t1 { width: 81px; padding-left: 2px; border: 0; } .t2 { width: 43px; padding-left: 2px; background: #fff; color: #3f9d48; border: 0; font-weight: 500; }
.t3 { width: 56px; } .t4 { width: 61px; } .t5 { width: 46px; }
.tb { width: 25px; margin-left: 4px; }
.tb + .tb { margin-left: 0; }
.hscroll { flex: 1; display: flex; align-items: center; justify-content: flex-end; gap: 4px; padding-right: 24px; padding-left: 264px; }
.vg { width: 4px; height: 10px; border: 1px solid #b5b5b5; border-width: 0 1px; }
.htrack { flex: 1; height: 15px; display: flex; align-items: center; background: #dcdcdc; padding: 0 8px; }
.la { border: 3px solid transparent; border-right: 4px solid #777; border-left: 0; }
.ra { border: 3px solid transparent; border-left: 4px solid #777; border-right: 0; margin-left: auto; }
.hthumb { width: 32px; height: 14px; margin-left: 9px; border: 1px solid #a8a8a8; border-radius: 7px; background: #f4f4f4; }

.side { width: 44px; flex-shrink: 0; position: relative; display: flex; flex-direction: column; align-items: center; }
.side .grip { width: 16px; margin: 12px 0 10px; }
.side button { width: 36px; height: 36px; }
.sidemore { position: absolute; left: 0; bottom: 0; width: 44px; height: 12px; background: #b0b6bb; display: flex; align-items: center; justify-content: center; }
.side button:last-of-type { position: relative; z-index: 1; }
.side button .off { stroke: #cdcdcd; }
.pill { position: absolute; z-index: 2; right: 3px; bottom: -14px; width: 7px; height: 58px; border-radius: 4px; background: linear-gradient(#9b9b9b 0 52%, #25b558 52%, #5ce07c); box-shadow: 0 0 2px #fff; }

.status { height: 28px; flex-shrink: 0; display: flex; align-items: center; color: #666; }
.sicon { width: 47px; height: 28px; border-right: 1px solid #e4e4e4; }
.protect { width: 104px; height: 28px; gap: 4px; border-right: 1px solid #e4e4e4; }
.sums { display: flex; gap: 8px; padding-left: 150px; }
.views { margin-left: auto; display: flex; align-items: center; gap: 2px; padding-right: 10px; border-right: 1px solid #e0e0e0; }
.views button { width: 24px; height: 24px; border-radius: 2px; }
.views .two { width: 30px; gap: 4px; }
.zoom { display: flex; align-items: center; padding: 0 16px 0 9px; gap: 10px; }
.pct { gap: 6px; }
.zoom input { appearance: none; width: 140px; height: 14px; background: linear-gradient(#999, #999) center / 100% 1px no-repeat; }
.zoom input::-webkit-slider-thumb { appearance: none; width: 12px; height: 12px; border: 1px solid #444; border-radius: 6px; background: #f2f2f2; }

.taskbar { height: 40px; flex-shrink: 0; display: flex; background: #050505; color: #fff; }
.win { width: 50px; }
.app-b { width: 49px; height: 40px; position: relative; }
.app-b::after { content: ""; position: absolute; left: 5px; right: 4px; bottom: 0; height: 2px; background: #76a9d9; }
.cur-app { background: #3a3a3a; }
.cur-app::after { left: 0; right: 0; }
.tray { margin-left: auto; display: flex; align-items: center; }
.ime { width: 14px; height: 14px; margin-right: 27px; background: #fff; color: #000; line-height: 14px; text-align: center; }
.t40, .t24 { display: flex; align-items: center; justify-content: center; height: 40px; width: 24px; }
.t40 { width: 42px; margin-left: -1px; }
.t40 + .t24 { margin-left: 3px; }
.lit { background: #141414; }
.clock { width: 76px; display: flex; flex-direction: column; align-items: center; line-height: 19px; }
.note { width: 48px; height: 40px; margin-right: 3px; padding-right: 10px; position: relative; display: flex; align-items: center; justify-content: center; border-right: 1px solid #555; }
.note b { position: absolute; left: 20px; top: 19px; width: 16px; height: 16px; border: 1px solid #888; border-radius: 8px; background: #2e2e2e; font-size: 11px; line-height: 14px; text-align: center; }
```
